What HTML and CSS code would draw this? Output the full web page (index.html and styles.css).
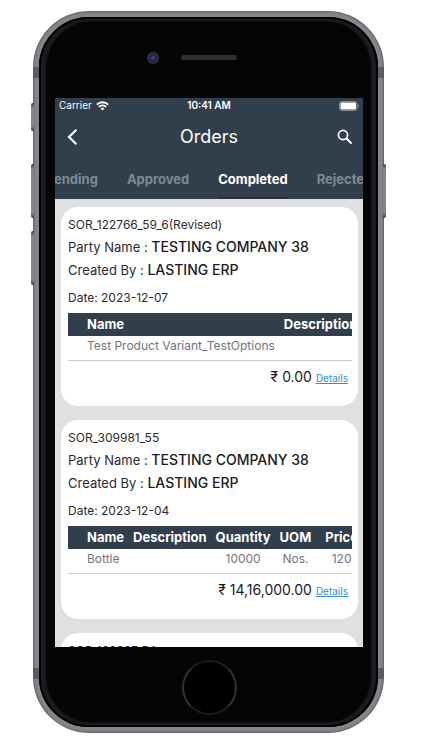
FILE: index.html
```html
<!DOCTYPE html>
<html lang="en">
<head>
<meta charset="utf-8">
<meta name="viewport" content="width=device-width, initial-scale=1">
<title>Orders</title>
<link rel="stylesheet" href="styles.css">
</head>
<body>
<div class="phone">
  <span class="key key-mute"></span>
  <span class="key key-up"></span>
  <span class="key key-down"></span>
  <span class="key key-power"></span>
  <div class="glass">
    <div class="bezel-top">
      <span class="camera"></span>
      <span class="speaker"></span>
    </div>
    <main class="screen">
      <header class="header">
        <div class="status">
          <span class="carrier">Carrier
            <svg width="13" height="10" viewBox="0 0 13 10" fill="none" stroke="#fff" stroke-width="1.9" aria-hidden="true"><path d="M.8 3.6a8.1 8.1 0 0 1 11.4 0M2.8 5.9a5.2 5.2 0 0 1 7.4 0"/><path d="M6.5 9.6 4.5 7.6a2.8 2.8 0 0 1 4 0z" fill="#fff" stroke="none"/></svg>
          </span>
          <span class="time">10:41 AM</span>
          <svg class="battery" width="20" height="10" viewBox="0 0 20 10" aria-hidden="true"><rect x=".5" y=".5" width="17.6" height="9" rx="2.4" fill="none" stroke="#87919a"/><rect x="1.5" y="1.5" width="15.6" height="7" rx="1.2" fill="#fff"/><path d="M19 3.4c1.1.5 1.1 2.7 0 3.2z" fill="#87919a"/></svg>
        </div>
        <div class="appbar">
          <button class="icon-btn" aria-label="Back"><svg width="12" height="18" viewBox="0 0 12 18" fill="none" stroke="#fff" stroke-width="2.2"><path d="M9.4 1.8 2 9l7.4 7.2"/></svg></button>
          <h1>Orders</h1>
          <button class="icon-btn search" aria-label="Search"><svg width="16" height="16" viewBox="0 0 16 16" fill="none" stroke="#fff" stroke-width="1.7"><circle cx="6" cy="6" r="4.6"/><path d="m9.3 9.3 5.3 5.3" stroke-width="2"/></svg></button>
        </div>
        <nav class="tabs">
          <a href="#pending">Pending</a>
          <a href="#approved">Approved</a>
          <a href="#completed" class="active">Completed</a>
          <a href="#rejected">Rejected</a>
        </nav>
      </header>
      <section class="orders">
        <article class="card">
          <p class="number">SOR_122766_59_6(Revised)</p>
          <p class="field">Party Name : <b>TESTING COMPANY 38</b></p>
          <p class="field">Created By : <b>LASTING ERP</b></p>
          <p class="date">Date: 2023-12-07</p>
          <div class="items">
            <table>
              <thead><tr><th>Name</th><th>Description</th></tr></thead>
              <tbody><tr><td>Test Product Variant_TestOptions</td><td></td></tr></tbody>
            </table>
          </div>
          <p class="total"><span>₹ 0.00</span> <a href="#details">Details</a></p>
        </article>
        <article class="card">
          <p class="number">SOR_309981_55</p>
          <p class="field">Party Name : <b>TESTING COMPANY 38</b></p>
          <p class="field">Created By : <b>LASTING ERP</b></p>
          <p class="date">Date: 2023-12-04</p>
          <div class="items">
            <table>
              <thead><tr><th>Name</th><th>Description</th><th>Quantity</th><th>UOM</th><th class="price">Price</th></tr></thead>
              <tbody><tr><td>Bottle</td><td></td><td>10000</td><td>Nos.</td><td class="price">120</td></tr></tbody>
            </table>
          </div>
          <p class="total"><span>₹ 14,16,000.00</span> <a href="#details">Details</a></p>
        </article>
        <article class="card">
          <p class="number">SOR_139937_54</p>
        </article>
      </section>
    </main>
    <div class="bezel-bottom"><button class="home" aria-label="Home"></button></div>
  </div>
</div>
</body>
</html>
```
FILE: styles.css
```css
* { box-sizing: border-box; }

body {
  margin: 0;
  padding: 11px 38px 17px 33px;
  background: #fff;
  font-family: Inter, "Liberation Sans", sans-serif;
  color: #2b2b2f;
}

p, h1 { margin: 0; }

.phone {
  position: relative;
  padding: 6px;
  border-radius: 56px;
  background: linear-gradient(#5c5c62 0 0) 0 56px / 100% 11px no-repeat,
    linear-gradient(#5c5c62 0 0) 0 657px / 100% 11px no-repeat,
    #85858c;
  box-shadow: inset 0 0 2px 1px #5c5c62;
}

.key {
  position: absolute;
  left: -2px;
  width: 3px;
  height: 54px;
  border-radius: 2px 0 0 2px;
  background: linear-gradient(#3a3a3e, #85858c 5px calc(100% - 5px), #3a3a3e);
}
.key-mute { top: 92px; height: 28px; }
.key-up { top: 153px; }
.key-down { top: 220px; }
.key-power { top: 153px; left: auto; right: -2px; border-radius: 0 2px 2px 0; }

.glass {
  padding: 0 15px 0 16px;
  border-radius: 50px;
  background: #050505;
  box-shadow: inset 0 0 0 2px #000, inset 3px 0 2px 4px #1d1d1f, inset -3px 0 2px 4px #1d1d1f;
}

.bezel-top {
  display: grid;
  grid-template-columns: 1fr 56px 1fr;
  align-items: center;
  column-gap: 22px;
  height: 81px;
}
.camera {
  justify-self: end;
  width: 12px;
  height: 12px;
  border-radius: 50%;
  background: radial-gradient(circle, #3b4590 0 1px, #1c2357 3px, #252a38 4px, #34373d 6px);
}
.speaker {
  height: 5px;
  border-radius: 3px;
  background: #303030;
}

.screen {
  height: 549px;
  overflow: hidden;
  background: #e0e0e0;
}

.header { background: #313e4c; color: #fff; }

.status {
  display: grid;
  grid-template-columns: 1fr auto 1fr;
  align-items: center;
  height: 15px;
  padding: 0 4px;
  font-size: 10px;
  line-height: 15px;
}
.carrier { display: flex; align-items: center; gap: 4px; }
.time { font-weight: 600; }
.battery { justify-self: end; }

.appbar {
  display: grid;
  grid-template-columns: 36px 1fr 36px;
  align-items: center;
  height: 48px;
}
.appbar h1 {
  text-align: center;
  font-size: 18px;
  font-weight: 400;
  line-height: 24px;
}
.icon-btn {
  display: flex;
  justify-content: center;
  padding: 0;
  border: 0;
  background: none;
}

.tabs {
  display: flex;
  justify-content: center;
  gap: 29px;
  height: 38px;
}
.tabs a {
  flex: none;
  color: #7f8993;
  font-size: 13px;
  font-weight: 700;
  line-height: 36px;
  text-decoration: none;
}
.tabs .active {
  color: #fff;
  border-bottom: 2px solid #26303f;
}

.orders {
  display: flex;
  flex-direction: column;
  gap: 14px;
  padding: 8px 5px 0 6px;
}
.card {
  padding: 7px 6px 17px 7px;
  border-radius: 17px;
  background: #fff;
}
.number, .date { font-size: 12px; line-height: 22px; }
.field { font-size: 13px; line-height: 23px; }
.field b {
  color: #1b1b1f;
  font-size: 14px;
  font-weight: 500;
  line-height: 1;
}
.date { padding-top: 5px; }

.items {
  margin-top: 4px;
  overflow: hidden;
  border-bottom: 1px solid #c9c9cf;
}
.items table {
  min-width: 100%;
  margin-bottom: 4px;
  border-collapse: collapse;
  white-space: nowrap;
}
.items th, .items td { padding: 0 5px 0 4px; text-align: center; }
.items th {
  background: #313e4c;
  color: #fff;
  font-size: 13px;
  font-weight: 700;
  line-height: 23px;
}
.items td {
  color: #70757f;
  font-size: 12px;
  line-height: 20px;
}
.items th:first-child, .items td:first-child { padding-left: 19px; text-align: left; }
.items .price { padding-left: 9px; }

.total {
  padding: 4px 4px 0 0;
  color: #1b1b1f;
  font-size: 14px;
  line-height: 24px;
  text-align: right;
}
.total a { color: #2f8fdb; font-size: 10px; line-height: 1; }

.bezel-bottom {
  display: flex;
  justify-content: center;
  align-items: center;
  height: 80px;
}
.home {
  width: 55px;
  height: 55px;
  border: 2px solid;
  border-color: #1c1c1e #333336;
  border-radius: 50%;
  background: #000;
}
```
